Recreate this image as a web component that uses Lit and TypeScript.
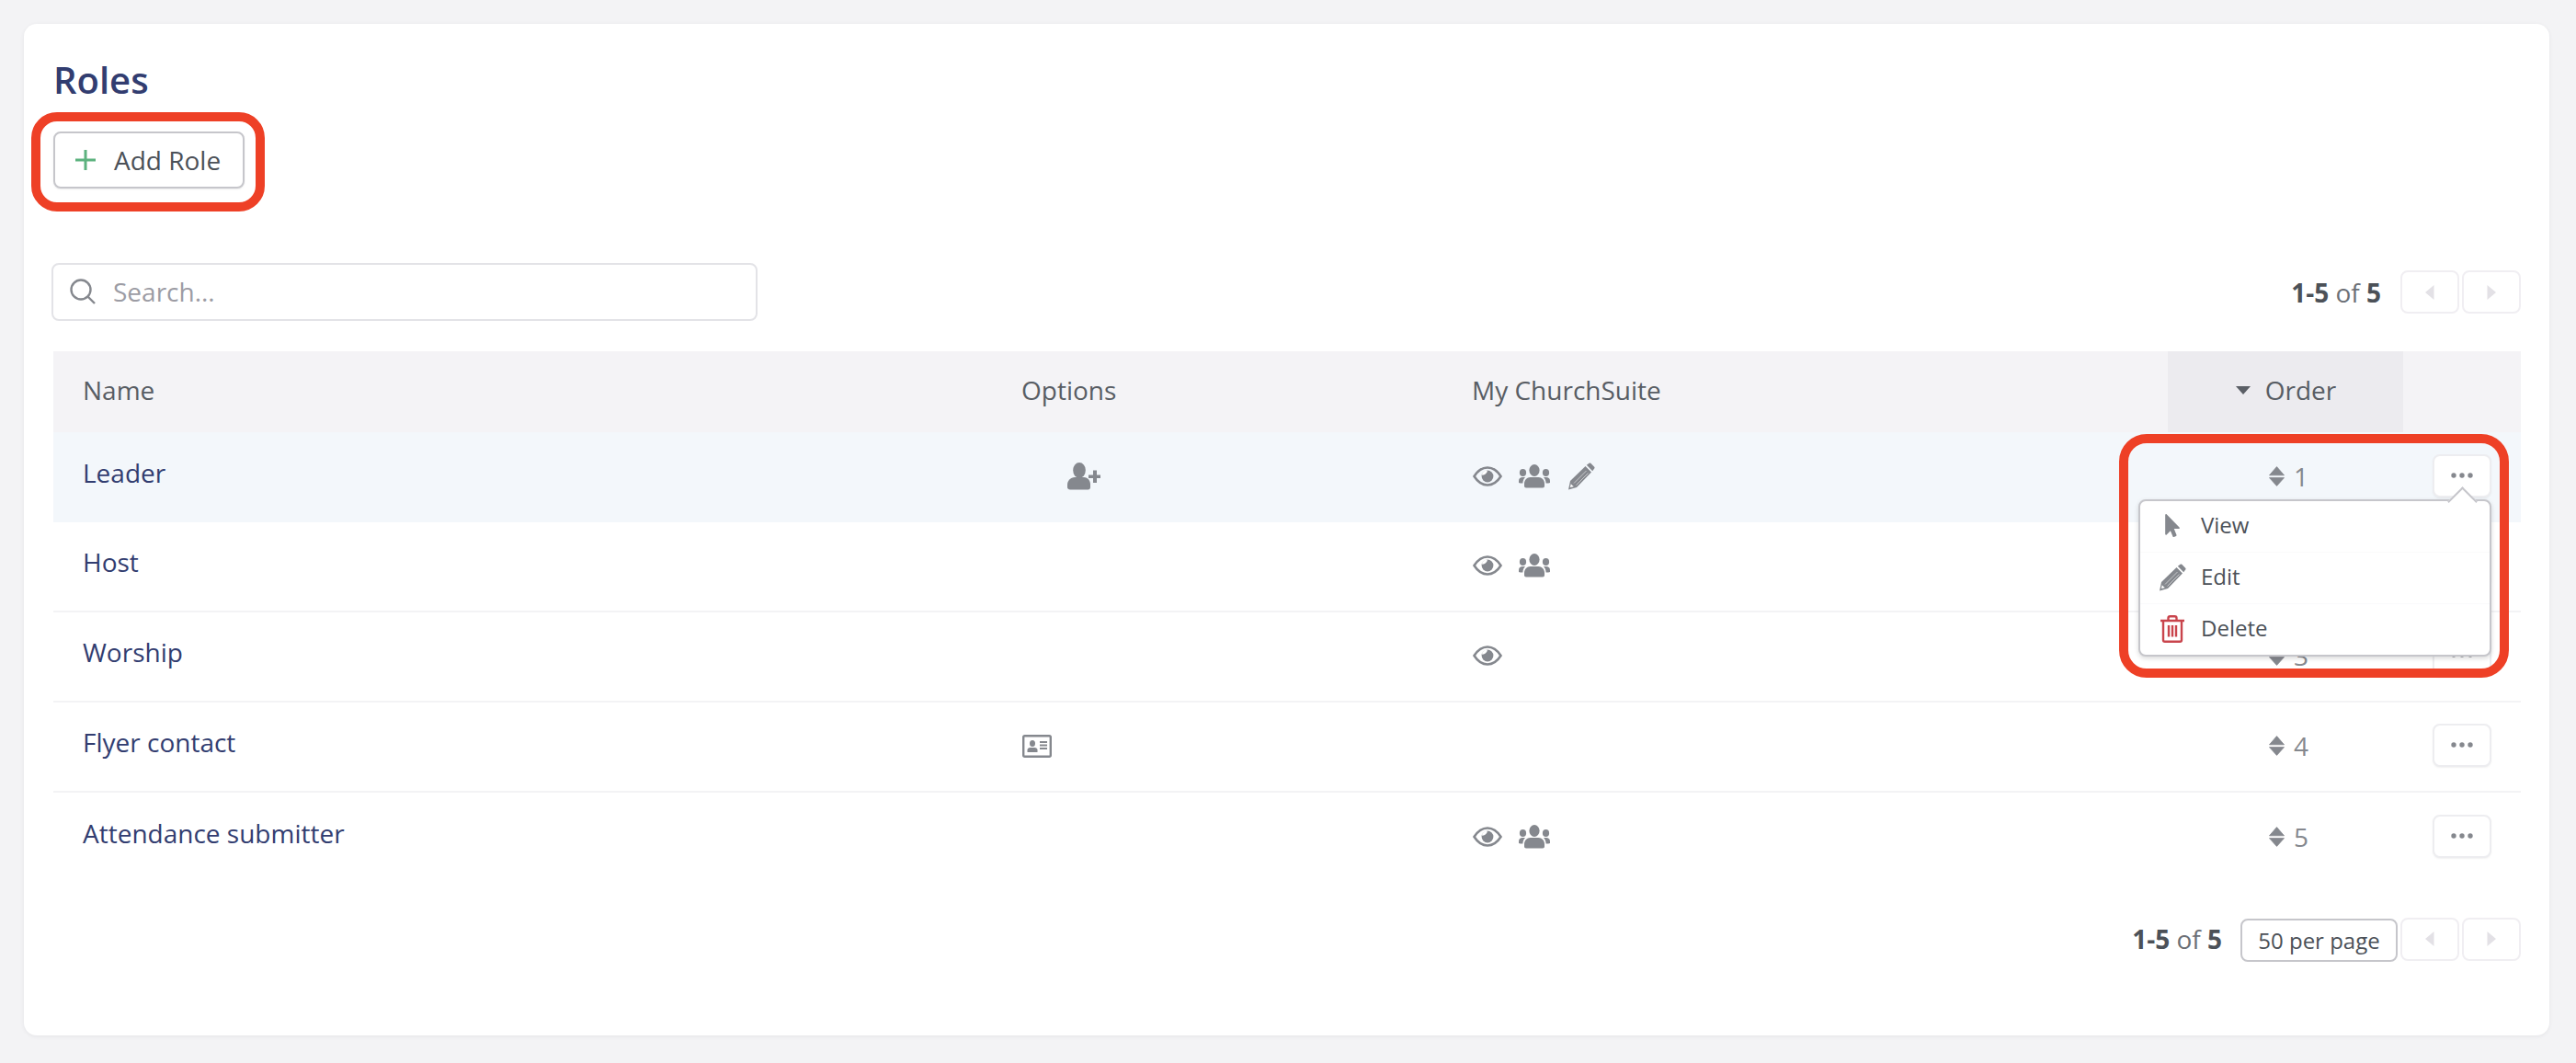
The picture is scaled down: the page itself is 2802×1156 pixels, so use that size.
import { LitElement, html, css, svg } from "lit";
import { customElement } from "lit/decorators.js";

const eye = html`<svg class="i" width="32" height="22" viewBox="0 0 32 22"><path d="M1.5 11C6 4 11 1.5 16 1.5S26 4 30.5 11C26 18 21 20.5 16 20.5S6 18 1.5 11Z" fill="none" stroke="currentColor" stroke-width="2.6"/><circle cx="16" cy="11" r="6.4" fill="currentColor"/><path d="M16 4.6A6.4 6.4 0 0 0 9.8 9.6C12.5 10 15.5 8.5 16 4.6Z" fill="#fff"/></svg>`;
const users = html`<svg class="i" width="36" height="26" viewBox="0 0 36 26" fill="currentColor"><ellipse cx="18" cy="6.5" rx="5.6" ry="6.5"/><ellipse cx="5.5" cy="9" rx="3.6" ry="4"/><ellipse cx="30.5" cy="9" rx="3.6" ry="4"/><path d="M9 25.5C7.8 25.5 7 24.7 7 23.5V21C7 17 10 14 13.5 14H22.5C26 14 29 17 29 21V23.5C29 24.7 28.2 25.5 27 25.5Z"/><path d="M1 20V18C1 15 3 14 5 14H8C6.5 15.500 5.500 17.500 5.400 20.500 3.500 20.500 2 20.500 1 20Z"/><path d="M35 20V18C35 15 33 14 31 14H28C29.500 15.500 30.500 17.500 30.600 20.500 32.500 20.500 34 20.500 35 20Z"/></svg>`;
const pencil = html`<svg class="i" width="30" height="30" viewBox="0 0 30 30"><path d="M1 29.500 3 20 19.500 4 26 10.500 10 27Z" fill="currentColor"/><path d="M20.800 2.800 23.500.800C24 .3 24.800.3 25.300.800L29.200 4.700C29.700 5.200 29.700 6 29.200 6.500L27.200 9.200Z" fill="currentColor"/><path d="M7 22.500 20.500 9M9.500 24.500 22.500 11.500" stroke="#fff" stroke-width="1" opacity=".55"/><path d="M2.900 27.100 3.700 23.200 6.800 26.300Z" fill="#fff"/></svg>`;
const userPlus = html`<svg class="i" width="36" height="30" viewBox="0 0 36 30" fill="currentColor"><ellipse cx="13" cy="8.500" rx="6.800" ry="8.500"/><path d="M3 29.500C1.500 29.500 0 28.500 0 27V24C0 20 3.500 16 8 16H18C22.500 16 25 20 25 24V27C25 28.500 24 29.500 22.500 29.500Z"/><path d="M28 8.500H32V13.500H36V17H32V22H28V17H23V13.500H28Z"/></svg>`;
const idCard = html`<svg class="i" width="32" height="25" viewBox="0 0 32 25"><rect x="1.200" y="1.200" width="29.600" height="22.600" rx="1.500" fill="none" stroke="currentColor" stroke-width="2.400"/><ellipse cx="11" cy="9.500" rx="3" ry="3.500" fill="currentColor"/><path d="M5.500 19V16.500C5.500 15 7 14 8.500 14H13.500C15 14 16.500 15 16.500 16.500V19Z" fill="currentColor"/><path d="M19 8H27M19 11.500H27M19 15H27" stroke="currentColor" stroke-width="1.800"/></svg>`;
const sort = html`<svg class="sort" width="17" height="22" viewBox="0 0 17 22" fill="currentColor" stroke="currentColor" stroke-width=".8" stroke-linejoin="round"><path d="M8.500 .6 16.500 9.800H.5Z"/><path d="M8.500 21.400 16.500 12.600H.5Z"/></svg>`;
const dots = svg`<circle cx="3" cy="3" r="2.700"/><circle cx="12" cy="3" r="2.700"/><circle cx="21" cy="3" r="2.700"/>`;

const rows = [
  { name: "Leader", order: 1, card: false, plus: true, e: true, u: true, p: true },
  { name: "Host", order: 2, card: false, plus: false, e: true, u: true, p: false },
  { name: "Worship", order: 3, card: false, plus: false, e: true, u: false, p: false },
  { name: "Flyer contact", order: 4, card: true, plus: false, e: false, u: false, p: false },
  { name: "Attendance submitter", order: 5, card: false, plus: false, e: true, u: true, p: false },
];

@customElement("app-root")
export class AppRoot extends LitElement {
  static styles = css`
    :host { display: block; min-height: 1156px; box-sizing: border-box; padding: 26px 29px 30px 26px; background: #f3f3f5; font-family: "Open Sans", "Noto Sans", sans-serif; font-size: 28px; color: #4c5158; }
    * { box-sizing: border-box; }
    .card { position: relative; height: 1100px; background: #fff; border-radius: 14px; padding: 34px 31px 0 32px; box-shadow: 0 1px 4px rgba(60,60,80,.08); }
    h1 { margin: 0; font-size: 40px; line-height: 54px; font-weight: 600; color: #323d70; }
    .add { display: inline-flex; align-items: center; margin: 29px 0 0 0; width: 208px; height: 62px; padding-left: 22px; border: 2px solid #c6c6cb; border-radius: 8px; box-shadow: 0 1px 2px rgba(0,0,0,.08); background: #fff; }
    .add svg { margin-right: 20px; }
    .bar { display: flex; justify-content: space-between; align-items: center; margin-top: 81px; height: 62px; }
    .search { display: flex; align-items: center; width: 768px; height: 63px; margin-left: -2px; padding-left: 18px; border: 2px solid #e3e3e7; border-radius: 8px; color: #9c9ca4; }
    .search svg { margin-right: 19px; }
    .pager { display: flex; align-items: center; margin-top: 1px; }
    .count { font-size: 28px; color: #6c7076; margin-right: 18px; }
    .count b { color: #4c5158; font-weight: 700; }
    .nav { display: flex; justify-content: center; align-items: center; width: 64px; height: 47px; margin-left: 3px; border: 2px solid #f0eef2; border-radius: 8px; background: #fff; }
    .nav svg { fill: #e3e1e6; }
    .row, .head { display: grid; grid-template-columns: 1021px 490px 789px 256px 128px; align-items: center; }
    .head { margin-top: 34px; height: 88px; background: #f4f3f6; color: #585d64; }
    .head > div { height: 100%; display: flex; align-items: center; padding-left: 32px; }
    .head .on { background: #ecebef; justify-content: center; padding: 0 0 4px; }
    .head .pad { padding-bottom: 4px; }
    .head .on svg { margin-right: 16px; margin-left: 1px; }
    .row { height: 98px; border-bottom: 2px solid #f3f3f5; }
    .row.last { border-bottom: none; }
    .row.hi { background: #f3f7fb; border-bottom: none; }
    .name { padding: 0 0 10px 32px; color: #323d70; }
    .opts, .my { display: grid; align-items: center; height: 30px; padding-left: 33px; color: #85888e; margin-bottom: 2px; }
    .opts { grid-template-columns: 49px 36px; }
    .my { grid-template-columns: 49px 54px 30px; }
    .i { display: block; }
    .ord { display: flex; align-items: center; justify-content: center; gap: 10px; color: #85888e; line-height: 30px; margin: 0 0 3px 7px; }
    .sort { display: block; color: #85888e; }
    .act { position: relative; height: 47px; }
    .more { position: absolute; left: 32px; top: -2px; display: flex; align-items: center; justify-content: center; width: 64px; height: 47px; border: 2px solid #ededf0; border-radius: 8px; background: #fff; box-shadow: 0 1px 2px rgba(0,0,0,.06); }
    .more svg { fill: #85888e; }
    .menu { position: absolute; z-index: 2; left: -288px; top: 47px; width: 384px; height: 171px; padding: 0; background: #fff; border: 2px solid #c6c6cb; border-radius: 8px; box-shadow: 0 2px 5px rgba(0,0,0,.15); color: #4c5158; font-size: 24px; }
    .menu::before { content: ""; position: absolute; right: 18px; top: -11px; width: 21px; height: 21px; background: #fff; border-left: 2px solid #c6c6cb; border-top: 2px solid #c6c6cb; transform: rotate(45deg); }
    .item { position: relative; display: grid; grid-template-columns: 66px 1fr; align-items: center; height: 56px; padding-bottom: 4px; border-bottom: 1px solid #fafafb; }
    .item:last-child { border-bottom: none; }
    .item span { justify-self: center; color: #85888e; display: block; margin: 3px 0 0 4px; }
    .item .red { color: #c9444c; }
    .foot { display: flex; justify-content: flex-end; align-items: center; margin-top: 37px; height: 48px; }
    .foot .count { margin-right: 20px; }
    .sel { width: 171px; height: 47px; display: flex; align-items: center; justify-content: center; font-size: 24px; border: 2px solid #c6c6cb; border-radius: 8px; margin-top: 2px; }
    .ann { position: absolute; border: 10px solid #ee4026; pointer-events: none; z-index: 3; }
    .a1 { left: 8px; top: 96px; width: 254px; height: 108px; border-radius: 28px; }
    .a2 { left: 2279px; top: 446px; width: 424px; height: 265px; border-radius: 30px; }
  `;

  private prev() {
    return html`<div class="nav"><svg width="10" height="16" viewBox="0 0 10 16"><path d="M9.500 0V16L0 8Z"/></svg></div>`;
  }
  private next() {
    return html`<div class="nav"><svg width="10" height="16" viewBox="0 0 10 16"><path d="M.5 0V16L10 8Z"/></svg></div>`;
  }
  private menu() {
    return html`<div class="menu">
      <div class="item"><span><svg class="i" width="16" height="25" viewBox="0 0 320 512" fill="#85888e"><path d="M302.189 329.126H196.105l55.831 135.993c3.889 9.428-.555 19.999-9.444 23.999l-49.165 21.427c-9.165 4-19.443-.571-23.332-9.714l-53.053-129.136-86.664 89.138C18.729 472.71 0 463.554 0 447.977V18.299C0 1.899 19.921-6.096 30.277 5.443l284.412 292.542c11.472 11.179 3.007 31.141-12.5 31.141z"/></svg></span><div>View</div></div>
      <div class="item"><span>${pencil}</span><div>Edit</div></div>
      <div class="item"><span class="red"><svg class="i" width="26" height="30" viewBox="0 0 26 30" fill="none" stroke="currentColor" stroke-width="2.400"><path d="M0 6H26M8.500 5.500V3C8.500 2 9.500 1.300 10.500 1.300H15.500C16.500 1.300 17.500 2 17.500 3V5.500"/><path d="M3 6V27C3 28 3.800 28.800 4.800 28.800H21.200C22.200 28.800 23 28 23 27V6M9 11V23.500M13 11V23.500M17 11V23.500"/></svg></span><div>Delete</div></div>
    </div>`;
  }

  render() {
    return html`<div class="card">
      <h1>Roles</h1>
      <div class="add"><svg width="22" height="22" viewBox="0 0 22 22"><path d="M11 0V22M0 11H22" stroke="#5cb27e" stroke-width="3"/></svg>Add Role</div>
      <div class="bar">
        <div class="search"><svg width="28" height="28" viewBox="0 0 28 28" fill="none" stroke="#85888e" stroke-width="2.400"><circle cx="12" cy="12" r="10.500"/><path d="M19.500 19.500 27 27"/></svg>Search...</div>
        <div class="pager"><div class="count"><b>1-5</b> of <b>5</b></div>${this.prev()}${this.next()}</div>
      </div>
      <div class="head">
        <div class="pad">Name</div><div class="pad">Options</div><div class="pad">My ChurchSuite</div>
        <div class="on"><svg width="16" height="9" viewBox="0 0 16 9" fill="#5b5f66"><path d="M0 0H16L8 9Z"/></svg>Order</div><div></div>
      </div>
      ${rows.map((r, i) => html`<div class="row ${i === 0 ? "hi" : ""} ${i === 4 ? "last" : ""}">
        <div class="name">${r.name}</div>
        <div class="opts"><div>${r.card ? idCard : ""}</div><div>${r.plus ? userPlus : ""}</div></div>
        <div class="my"><div>${r.e ? eye : ""}</div><div>${r.u ? users : ""}</div><div>${r.p ? pencil : ""}</div></div>
        <div class="ord">${sort}<span>${r.order}</span></div>
        <div class="act"><div class="more"><svg width="24" height="6" viewBox="0 0 24 6">${dots}</svg></div>${i === 0 ? this.menu() : ""}</div>
      </div>`)}
      <div class="foot"><div class="count"><b>1-5</b> of <b>5</b></div><div class="sel">50 per page</div>${this.prev()}${this.next()}</div>
      <div class="ann a1"></div>
      <div class="ann a2"></div>
    </div>`;
  }
}
